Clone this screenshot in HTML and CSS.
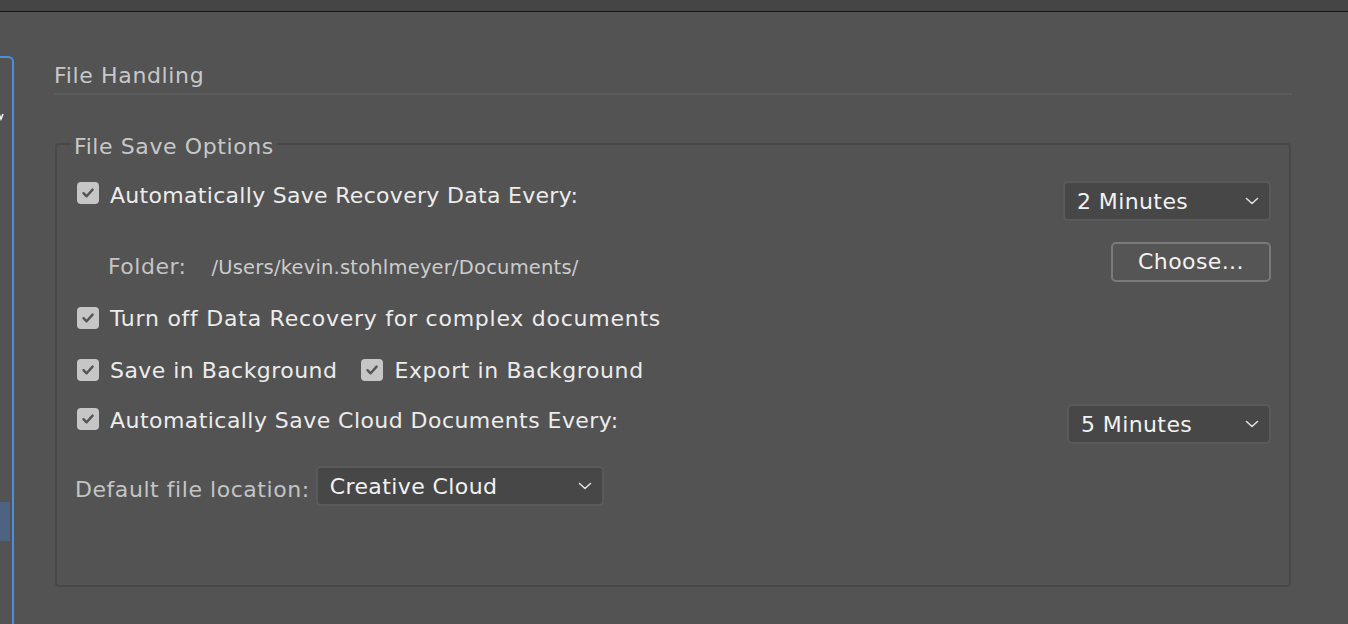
FILE: index.html
```html
<!DOCTYPE html>
<html>
<head>
<meta charset="utf-8">
<link rel="stylesheet" href="styles.css">
</head>
<body>
<div class="topbar"></div>
<div class="main">
  <div class="sidebar">
    <div class="side-item"><svg viewBox="0 0 4 8" width="4" height="8"><path d="M-1 1 L1 6 L3 1" fill="none" stroke="#f0f0f0" stroke-width="1.6"/></svg></div>
    <div class="side-selected"></div>
  </div>
  <div class="content">
    <div class="section-title">File Handling</div>
    <fieldset class="group">
      <legend>File Save Options</legend>
      <div class="row row1">
        <span class="check"><svg viewBox="0 0 22 22" width="22" height="22"><path d="M6.5 11.2 L9.6 14.3 L15.6 7.6" fill="none" stroke="#545454" stroke-width="2.4" stroke-linecap="round" stroke-linejoin="round"/></svg></span>
        <span class="label">Automatically Save Recovery Data Every:</span>
        <span class="spacer"></span>
        <div class="select sel-2">
          <span>2 Minutes</span>
          <svg class="chev" viewBox="0 0 14 8" width="14" height="8"><path d="M1.5 1.5 L7 6.5 L12.5 1.5" fill="none" stroke="#e0e0e0" stroke-width="1.6" stroke-linecap="round" stroke-linejoin="round"/></svg>
        </div>
      </div>
      <div class="row row2">
        <span class="folder-label">Folder:</span>
        <span class="path">/Users/kevin.stohlmeyer/Documents/</span>
        <span class="spacer"></span>
        <div class="button">Choose...</div>
      </div>
      <div class="row row3">
        <span class="check"><svg viewBox="0 0 22 22" width="22" height="22"><path d="M6.5 11.2 L9.6 14.3 L15.6 7.6" fill="none" stroke="#545454" stroke-width="2.4" stroke-linecap="round" stroke-linejoin="round"/></svg></span>
        <span class="label label-wide">Turn off Data Recovery for complex documents</span>
      </div>
      <div class="row row4">
        <span class="check"><svg viewBox="0 0 22 22" width="22" height="22"><path d="M6.5 11.2 L9.6 14.3 L15.6 7.6" fill="none" stroke="#545454" stroke-width="2.4" stroke-linecap="round" stroke-linejoin="round"/></svg></span>
        <span class="label">Save in Background</span>
        <span class="check check-second"><svg viewBox="0 0 22 22" width="22" height="22"><path d="M6.5 11.2 L9.6 14.3 L15.6 7.6" fill="none" stroke="#545454" stroke-width="2.4" stroke-linecap="round" stroke-linejoin="round"/></svg></span>
        <span class="label">Export in Background</span>
      </div>
      <div class="row row5">
        <span class="check"><svg viewBox="0 0 22 22" width="22" height="22"><path d="M6.5 11.2 L9.6 14.3 L15.6 7.6" fill="none" stroke="#545454" stroke-width="2.4" stroke-linecap="round" stroke-linejoin="round"/></svg></span>
        <span class="label">Automatically Save Cloud Documents Every:</span>
        <span class="spacer"></span>
        <div class="select sel-5">
          <span>5 Minutes</span>
          <svg class="chev" viewBox="0 0 14 8" width="14" height="8"><path d="M1.5 1.5 L7 6.5 L12.5 1.5" fill="none" stroke="#e0e0e0" stroke-width="1.6" stroke-linecap="round" stroke-linejoin="round"/></svg>
        </div>
      </div>
      <div class="row row6">
        <span class="dim-label">Default file location:</span>
        <div class="select sel-loc">
          <span>Creative Cloud</span>
          <svg class="chev" viewBox="0 0 14 8" width="14" height="8"><path d="M1.5 1.5 L7 6.5 L12.5 1.5" fill="none" stroke="#e0e0e0" stroke-width="1.6" stroke-linecap="round" stroke-linejoin="round"/></svg>
        </div>
      </div>
    </fieldset>
  </div>
</div>
</body>
</html>
```

FILE: styles.css
```css
html, body {
  margin: 0;
  padding: 0;
  background: #535353;
  overflow: hidden;
}
body {
  width: 1348px;
  height: 624px;
  font-family: "DejaVu Sans", "Liberation Sans", sans-serif;
  color: #e8e8e8;
}
.topbar {
  height: 11px;
  background: #454545;
  border-bottom: 1px solid #141414;
}
.main {
  display: flex;
  height: 612px;
}
.sidebar {
  width: 12px;
  margin-top: 44px;
  border-top: 2px solid #4a90dc;
  border-right: 2px solid #4a90dc;
  border-top-right-radius: 6px;
  display: flex;
  flex-direction: column;
  overflow: hidden;
}
.side-item {
  height: 8px;
  margin-top: 55px;
  width: 4px;
  overflow: hidden;
}
.side-item svg { display: block; }
.side-selected {
  margin-top: 381px;
  width: 10px;
  height: 39px;
  background: #4c6382;
}
.content {
  margin-left: 40px;
  width: 1238px;
  padding-top: 50px;
}
.section-title {
  font-size: 22px;
  letter-spacing: 0.65px;
  line-height: 28px;
  color: #c8c8c8;
  padding-bottom: 3px;
  border-bottom: 2px solid #5d5d5d;
}
.group {
  margin: 32px 1px 0 1px;
  padding: 0 18px 0 20px;
  border: 2px solid #484848;
  border-radius: 4px;
  height: 460px;
  box-sizing: border-box;
  min-width: 0;
}
.group legend {
  font-size: 22px;
  letter-spacing: 0.6px;
  line-height: 28px;
  color: #c8c8c8;
  padding: 6px 3px 0 3px;
  margin-left: -6px;
}
.row {
  display: flex;
  align-items: flex-start;
}
.spacer {
  flex: 1;
}
.label {
  font-size: 22px;
  letter-spacing: 0.45px;
  line-height: 28px;
  padding-top: 2px;
  color: #ececec;
  white-space: nowrap;
}
.label-wide {
  letter-spacing: 0.75px;
}
.check {
  width: 22px;
  height: 22px;
  border-radius: 4px;
  background: #c6c6c6;
  margin-right: 11px;
  flex: none;
  display: block;
}
.check svg { display: block; }
.check-second {
  margin-left: 24px;
}
.row1 {
  margin-top: 19px;
  height: 41px;
}
.row1 .check { margin-top: 2px; }
.row1 .label { letter-spacing: 0.3px; }
.select {
  display: flex;
  align-items: center;
  box-sizing: border-box;
  height: 40px;
  background: #474747;
  border: 2px solid #5a5a5a;
  border-radius: 5px;
  padding: 0 10px 0 12px;
  font-size: 22px;
  letter-spacing: 0.4px;
  color: #f2f2f2;
  flex: none;
}
.select span { flex: 1; white-space: nowrap; }
.select .chev { flex: none; }
.sel-2 { width: 208px; margin-top: 1px; }
.sel-5 { width: 204px; }
.row2 {
  margin-top: 21px;
  height: 40px;
}
.folder-label {
  margin-left: 31px;
  margin-top: 11px;
  font-size: 22px;
  letter-spacing: 0.5px;
  line-height: 28px;
  color: #c4c4c4;
}
.path {
  margin-left: 25px;
  margin-top: 12px;
  font-size: 19.5px;
  letter-spacing: 0.2px;
  line-height: 28px;
  color: #cccccc;
  white-space: nowrap;
}
.button {
  box-sizing: border-box;
  width: 160px;
  height: 40px;
  border: 2px solid #7a7a7a;
  border-radius: 5px;
  background: #555555;
  text-align: center;
  font-size: 22px;
  letter-spacing: 0.4px;
  line-height: 36px;
  color: #f2f2f2;
  flex: none;
}
.row3 {
  margin-top: 21px;
  height: 30px;
}
.row3 .check, .row4 .check { margin-top: 4px; }
.row4 {
  margin-top: 22px;
  height: 30px;
}
.row4 .label:last-child { letter-spacing: 0.6px; }
.row5 {
  margin-top: 19px;
  height: 40px;
}
.row5 .label { margin-top: 1px; }
.row5 .check { margin-top: 4px; }
.row6 {
  margin-top: 22px;
  height: 40px;
}
.dim-label {
  margin-left: -2px;
  margin-top: 10px;
  margin-right: 6px;
  font-size: 22px;
  letter-spacing: 0.55px;
  line-height: 28px;
  color: #c4c4c4;
  white-space: nowrap;
}
.sel-loc {
  width: 288px;
}
```
